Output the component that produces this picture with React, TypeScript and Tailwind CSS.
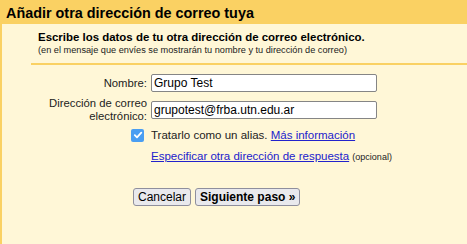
export default function App() {
  return (
    <div className="w-[467px] h-[244px] overflow-hidden bg-[#fff7d7] text-[#222] font-['Liberation_Sans',Arial,sans-serif]">
      {/* Title bar */}
      <div className="h-[24px] bg-[#fad163] px-[6px] pt-[1px] text-[14.4px] font-bold leading-[24px] text-black">
        Añadir otra dirección de correo tuya
      </div>

      <div className="h-[220px] border-l-2 border-[#fad163] flex flex-col">
        {/* Intro */}
        <div className="pl-[36px] pt-[6px]">
          <p className="text-[11.45px] font-bold leading-[14px] text-black">
            Escribe los datos de tu otra dirección de correo electrónico.
          </p>
          <p className="text-[9.2px] leading-[12px]">
            (en el mensaje que envíes se mostrarán tu nombre y tu dirección de correo)
          </p>
        </div>
        <div className="ml-[29px] mt-[7px] h-[2px] bg-[#fad163]" />

        {/* Nombre */}
        <div className="mt-[9px] flex items-center gap-[4px]">
          <label className="w-[145px] text-right text-[11.3px] leading-[13px]">Nombre:</label>
          <div className="w-[226px] h-[18px] rounded-[2px] border border-[#858585] bg-white px-[2px] text-[12px] leading-[16px] text-black">
            Grupo Test
          </div>
        </div>

        {/* Dirección */}
        <div className="mt-[5px] flex items-center gap-[4px]">
          <label className="w-[145px] text-right text-[11.3px] leading-[13px]">
            Dirección de correo
            <br />
            electrónico:
          </label>
          <div className="w-[226px] h-[18px] rounded-[2px] border border-[#858585] bg-white px-[2px] text-[12px] leading-[16px] text-black">
            grupotest@frba.utn.edu.ar
          </div>
        </div>

        {/* Alias */}
        <div className="mt-[5px] flex items-center gap-[4px]">
          <div className="w-[145px] flex justify-end pr-[3px]">
            <span className="w-[13px] h-[13px] rounded-[2px] bg-[#4a9ef2] flex items-center justify-center">
              <svg width="10" height="10" viewBox="0 0 10 10" fill="none">
                <path d="M1.8 5.2 L4 7.3 L8.3 2.6" stroke="white" strokeWidth="1.8" strokeLinecap="round" strokeLinejoin="round" />
              </svg>
            </span>
          </div>
          <p className="text-[11.5px] leading-[14px]">
            Tratarlo como un alias.{' '}
            <a className="text-[#2222cc] underline">Más información</a>
          </p>
        </div>

        {/* Respuesta */}
        <div className="mt-[7px] flex items-center gap-[4px]">
          <div className="w-[145px]" />
          <p className="text-[11.5px] leading-[14px]">
            <a className="text-[#2222cc] underline">Especificar otra dirección de respuesta</a>{' '}
            <span className="text-[9px]">(opcional)</span>
          </p>
        </div>

        {/* Buttons */}
        <div className="mt-[24px] pl-[131px] flex gap-[4px]">
          <button className="h-[18px] px-[4px] rounded-[3px] border border-[#8f8f9d] bg-[#e9e9ed] text-[12px] leading-[14px] text-black">
            Cancelar
          </button>
          <button className="h-[18px] px-[4px] rounded-[3px] border border-[#8f8f9d] bg-[#e9e9ed] text-[12px] font-bold leading-[14px] text-black">
            Siguiente paso »
          </button>
        </div>
      </div>
    </div>
  );
}
